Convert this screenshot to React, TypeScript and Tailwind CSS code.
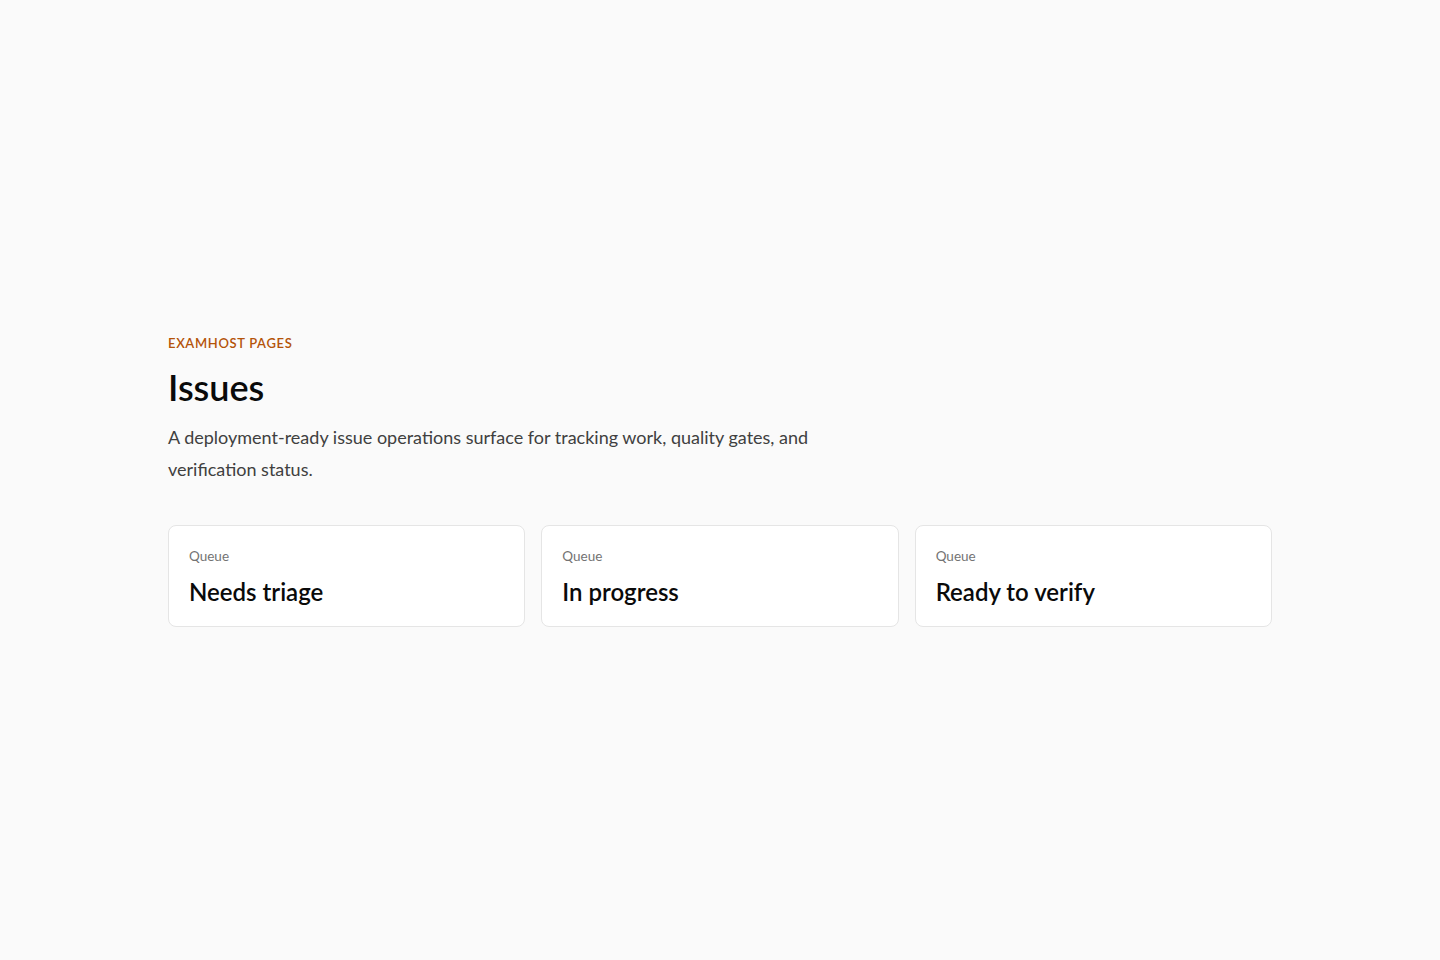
const QUEUES = ["Needs triage", "In progress", "Ready to verify"];

export default function App() {
  return (
    <div className="flex min-h-screen items-center bg-[#fafafa] font-['Lato',sans-serif] text-neutral-950">
      <main className="mx-auto w-full max-w-6xl px-6">
        {/* Header */}
        <p className="pt-px text-[13px] font-semibold uppercase tracking-[0.05em] text-[#b45309]">
          Examhost pages
        </p>
        <h1 className="mt-[11px] text-[36px] font-semibold leading-[44px]">Issues</h1>
        <p className="mt-3 max-w-2xl text-[18px] leading-8 text-neutral-700">
          A deployment-ready issue operations surface for tracking work, quality gates, and
          verification status.
        </p>

        {/* Queue cards */}
        <div className="mt-10 grid grid-cols-3 gap-4">
          {QUEUES.map((q) => (
            <div key={q} className="rounded-lg border border-neutral-200 bg-white px-5 pt-5 pb-[18px]">
              <div className="text-[13.5px] leading-5 text-neutral-500">Queue</div>
              <div className="mt-[10px] text-[24px] font-semibold leading-8">{q}</div>
            </div>
          ))}
        </div>
      </main>
    </div>
  );
}
